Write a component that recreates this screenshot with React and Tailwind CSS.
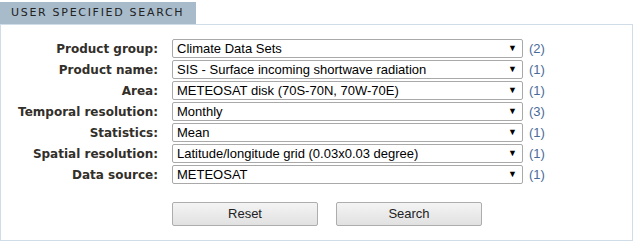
const rows = [
    { label: 'Product group:', value: 'Climate Data Sets', count: 2 },
    { label: 'Product name:', value: 'SIS - Surface incoming shortwave radiation', count: 1 },
    { label: 'Area:', value: 'METEOSAT disk (70S-70N, 70W-70E)', count: 1 },
    { label: 'Temporal resolution:', value: 'Monthly', count: 3 },
    { label: 'Statistics:', value: 'Mean', count: 1 },
    { label: 'Spatial resolution:', value: 'Latitude/longitude grid (0.03x0.03 degree)', count: 1 },
    { label: 'Data source:', value: 'METEOSAT', count: 1 },
];

const buttonClass = "h-[24px] w-[146px] rounded-[2px] border border-[#adadad] bg-gradient-to-b from-[#f4f4f4] to-[#e1e1e1] text-[13px] text-[#222] font-['Liberation_Sans',Arial,sans-serif]";

export default function App() {
    return (
        <div className="w-[633px] h-[245px] bg-white pt-[2px]">
            <div className="w-[196px] h-[22px] bg-[#a8bbcb] pl-[11px] flex items-center font-['DejaVu_Sans',Verdana,sans-serif] text-[11px] tracking-[1.7px] text-[#222]">
                USER SPECIFIED SEARCH
            </div>
            <div className="w-[633px] h-[217px] border border-[#d0dde8] pt-[14px]">
                <div className="flex flex-col gap-[2px]">
                    {rows.map(r => (
                        <div key={r.label} className="flex items-center h-[19px]">
                            <div className="w-[157px] text-right font-['DejaVu_Sans',Verdana,sans-serif] font-bold text-[12px] text-[#332f2a]">
                                {r.label}
                            </div>
                            <div className="ml-[14px] w-[351px] h-[19px] flex items-center justify-between border border-[#a9a9a9] rounded-[2px] bg-white pl-[4px] pr-[5px] font-['Liberation_Sans',Arial,sans-serif] text-[13px] text-black">
                                <span>{r.value}</span>
                                <span className="text-[9px] leading-none">▼</span>
                            </div>
                            <div className="ml-[6px] font-['Liberation_Sans',Arial,sans-serif] text-[13px] text-[#4a6a98]">({r.count})</div>
                        </div>
                    ))}
                </div>
                <div className="flex gap-[18px] ml-[171px] mt-[18px]">
                    <button type="button" className={buttonClass}>Reset</button>
                    <button type="button" className={buttonClass}>Search</button>
                </div>
            </div>
        </div>
    );
}
